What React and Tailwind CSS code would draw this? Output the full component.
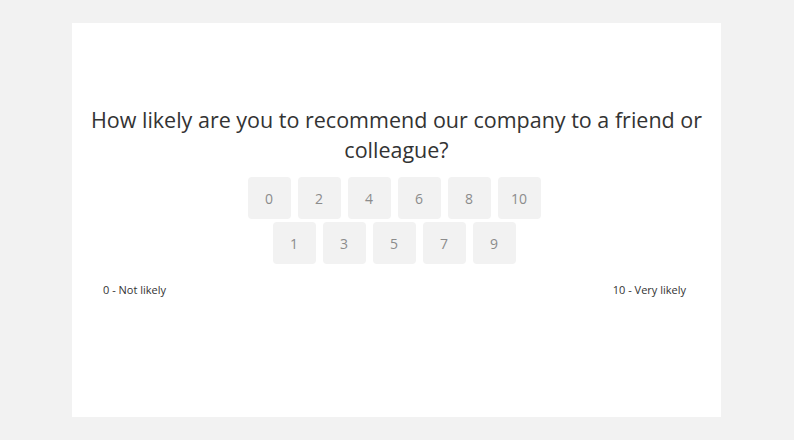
import React from "react";

const topRow = [0, 2, 4, 6, 8, 10];
const bottomRow = [1, 3, 5, 7, 9];

function ScoreButton({ value }) {
  return (
    <button className="w-[43px] h-[42px] rounded-[4px] bg-[#f2f2f2] text-[14px] text-[#8c8c8c] flex items-center justify-center">
      {value}
    </button>
  );
}

export default function App() {
  return (
    <div className="min-h-[440px] w-full bg-[#f2f2f2] pt-[23px] font-['Open_Sans',sans-serif]">
      <div className="ml-[72px] w-[649px] h-[394px] bg-white flex flex-col items-center px-[10px]">
        <h1 className="mt-[82px] text-center text-[21.5px] leading-[30px] text-[#333333] font-normal">
          How likely are you to recommend our company to a friend or colleague?
        </h1>

        {/* Score buttons */}
        <div className="mt-[12px] flex flex-col items-center gap-[3px] mr-[5px]">
          <div className="flex gap-[7px]">
            {topRow.map((n) => (
              <ScoreButton key={n} value={n} />
            ))}
          </div>
          <div className="flex gap-[7px]">
            {bottomRow.map((n) => (
              <ScoreButton key={n} value={n} />
            ))}
          </div>
        </div>

        <div className="mt-[18px] w-full flex justify-between pl-[21px] pr-[25px] text-[11px] leading-[16px] text-[#333333]">
          <span>0 - Not likely</span>
          <span>10 - Very likely</span>
        </div>
      </div>
    </div>
  );
}
